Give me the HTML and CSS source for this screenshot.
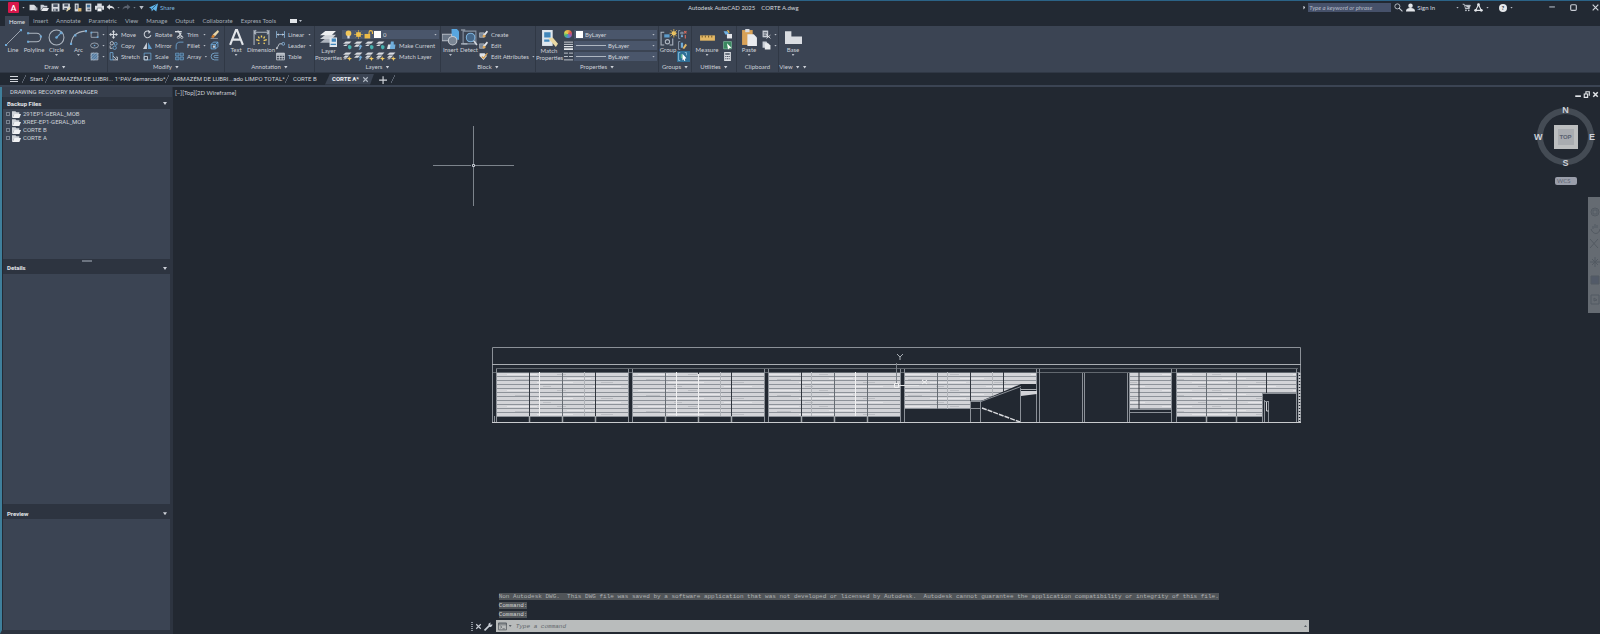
FILE: index.html
```html
<!DOCTYPE html>
<html lang="en">
<head>
<meta charset="utf-8">
<title>Autodesk AutoCAD 2025 - CORTE A.dwg</title>
<link rel="stylesheet" href="styles.css">
</head>
<body>
<svg class="defs" aria-hidden="true">
  <defs>
    <symbol id="new" viewBox="0 0 16 16"><path d="M1 3h8l4 4v6H1z" fill="#d9dce1"/><path d="M10 8h5v5h-5z" fill="#aeb4bd"/></symbol>
    <symbol id="open" viewBox="0 0 16 16"><path d="M1 3h5l2 2h5v3H5l-3 5H1z" fill="#c9ced6"/><path d="M5 9h11l-3 5H2z" fill="#e4e6ea"/></symbol>
    <symbol id="save" viewBox="0 0 16 16"><path d="M1 1h14v14H1z" fill="#d9dce1"/><path d="M4 2h8v5H4zM4 10h8v5H4z" fill="#4a5361"/><path d="M6 10h2v4H6z" fill="#d9dce1"/></symbol>
    <symbol id="saveas" viewBox="0 0 16 16"><path d="M1 1h13v11H1z" fill="#d9dce1"/><path d="M4 2h7v4H4zM4 9h5v3H4z" fill="#4a5361"/><path d="M7 14l7-7 2 2-7 6z" fill="#e9d9a6"/></symbol>
    <symbol id="mobile" viewBox="0 0 16 16"><path d="M3 1h7v14H3z" fill="#d9dce1"/><path d="M5 3h3v8H5z" fill="#59616e"/><path d="M9 9h6v6H9z" fill="#d5b06c"/></symbol>
    <symbol id="webdoc" viewBox="0 0 16 16"><path d="M3 1h10v14H3z" fill="#d9dce1"/><path d="M5 3h6v5H5z" fill="#3f6c93"/><path d="M6 10h5v3H6z" fill="#59616e"/></symbol>
    <symbol id="plot" viewBox="0 0 16 16"><path d="M4 1h8v4H4zM0 5h16v7H0z" fill="#d9dce1"/><path d="M4 9h8v6H4z" fill="#fff" stroke="#4a5361"/></symbol>
    <symbol id="undo" viewBox="0 0 16 16"><path d="M1 7l6-5v3c5 0 8 3 8 7-2-3-4-3-8-3v3z" fill="#d9dce1"/></symbol>
    <symbol id="redo" viewBox="0 0 16 16"><path d="M15 7L9 2v3c-5 0-8 3-8 7 2-3 4-3 8-3v3z" fill="#59616e"/></symbol>
    <symbol id="plane" viewBox="0 0 16 16"><path d="M0 8L16 1l-3 14-5-4-3 4-1-5z" fill="#5fb4ea"/><path d="M5 11l8-8" stroke="#222933"/></symbol>
    <symbol id="search" viewBox="0 0 16 16"><circle cx="6" cy="6" r="4.500" fill="none" stroke="#c9ced6" stroke-width="1.500"/><path d="M9 9l6 6" stroke="#c9ced6" stroke-width="2"/></symbol>
    <symbol id="user" viewBox="0 0 16 16"><circle cx="8" cy="5" r="4" fill="#e2e5e9"/><path d="M0 15c0-5 4-6 8-6s8 1 8 6z" fill="#e2e5e9"/></symbol>
    <symbol id="cart" viewBox="0 0 16 16"><path d="M1 2h3l2 8h8M5 4h10l-2 5H6" fill="#c9ced6" stroke="#c9ced6"/><circle cx="7" cy="13" r="1.500" fill="#c9ced6"/><circle cx="12" cy="13" r="1.500" fill="#c9ced6"/></symbol>
    <symbol id="tri" viewBox="0 0 16 16"><path d="M8 3L3 13h10z" fill="none" stroke="#e2e5e9" stroke-width="2"/><circle cx="8" cy="3" r="2.500" fill="#e2e5e9"/><circle cx="3" cy="13" r="2.500" fill="#e2e5e9"/><circle cx="13" cy="13" r="2.500" fill="#e2e5e9"/></symbol>
    <symbol id="line" viewBox="0 0 16 16"><path d="M1 15L15 1" stroke="#aeb6c1" stroke-width=".8"/><path d="M0 14h2v2H0zM14 0h2v2h-2z" fill="#6fa9d6"/></symbol>
    <symbol id="polyline" viewBox="0 0 16 16"><path d="M2 4h8a4 4 0 0 1 0 8H2" fill="none" stroke="#aeb6c1"/><path d="M1 3h2v2H1zM1 11h2v2H1zM13 6h2v2h-2z" fill="#6fa9d6"/></symbol>
    <symbol id="circle" viewBox="0 0 16 16"><circle cx="8" cy="8" r="7" fill="none" stroke="#aeb6c1"/><path d="M8 8l5-5M11 3h2v2" stroke="#6fa9d6" fill="none"/><circle cx="8" cy="8" r="1.200" fill="#6fa9d6"/></symbol>
    <symbol id="arc" viewBox="0 0 16 16"><path d="M1 14C2 6 6 3 14 2" fill="none" stroke="#aeb6c1"/><path d="M0 13h2v2H0zM14 1h2v2h-2zM4 5h2v2H4z" fill="#6fa9d6"/></symbol>
    <symbol id="rect" viewBox="0 0 16 16"><path d="M2 4h12v9H2z" fill="none" stroke="#aeb6c1" stroke-width="1.400"/><path d="M1 3h3v3H1zM12 11h3v3h-3z" fill="#6fa9d6"/></symbol>
    <symbol id="ellipse" viewBox="0 0 16 16"><ellipse cx="8" cy="8" rx="7" ry="4.500" fill="none" stroke="#aeb6c1" stroke-width="1.400"/><circle cx="8" cy="8" r="1.500" fill="#6fa9d6"/></symbol>
    <symbol id="hatch" viewBox="0 0 16 16"><path d="M2 2h12v12H2z" fill="#55789b" stroke="#aeb6c1" stroke-width="1.500"/><path d="M1 6L6 1M1 11L11 1M2 15L15 2M7 15l8-8" stroke="#9cc4e4"/></symbol>
    <symbol id="move" viewBox="0 0 16 16"><path d="M8 0l3 4H9v3h3V5l4 3-4 3V9H9v3h2l-3 4-3-4h2V9H4v2L0 8l4-3v2h3V4H5z" fill="#d3d7dd"/></symbol>
    <symbol id="copy" viewBox="0 0 16 16"><circle cx="5" cy="4" r="3" fill="none" stroke="#c9ced6" stroke-width="1.500"/><circle cx="12" cy="5" r="2.500" fill="none" stroke="#6fa9d6" stroke-width="1.500"/><circle cx="10" cy="12" r="3" fill="none" stroke="#6fa9d6" stroke-width="1.500"/><path d="M2 8v5h4" fill="none" stroke="#c9ced6" stroke-width="1.500"/></symbol>
    <symbol id="stretch" viewBox="0 0 16 16"><path d="M2 1h5v13H2z" fill="none" stroke="#6fa9d6" stroke-width="1.500"/><path d="M7 7l7 7H7M12 9h3v6" fill="none" stroke="#c9ced6" stroke-width="1.500"/></symbol>
    <symbol id="rotate" viewBox="0 0 16 16"><path d="M12 3A6 6 0 1 0 14 9" fill="none" stroke="#c9ced6" stroke-width="1.800"/><path d="M9 0l5 3-4 4z" fill="#c9ced6"/></symbol>
    <symbol id="mirror" viewBox="0 0 16 16"><path d="M7 2v12H0z" fill="#c9ced6"/><path d="M9 2v12h7z" fill="#5e9ccc"/></symbol>
    <symbol id="scale" viewBox="0 0 16 16"><path d="M2 2h12v12H2z" fill="none" stroke="#6fa9d6" stroke-width="1.400"/><path d="M2 8h6v6H2z" fill="none" stroke="#d3d7dd" stroke-width="1.500"/></symbol>
    <symbol id="trim" viewBox="0 0 16 16"><path d="M0 3h12" stroke="#d3d7dd" stroke-width="2.500"/><path d="M5 1l7 11M11 5l-5 7" stroke="#d3d7dd" stroke-width="2"/><circle cx="12" cy="13" r="2" fill="none" stroke="#d3d7dd" stroke-width="1.500"/><circle cx="6" cy="13" r="2" fill="none" stroke="#d3d7dd" stroke-width="1.500"/></symbol>
    <symbol id="fillet" viewBox="0 0 16 16"><path d="M2 15V9c0-5 3-7 7-7h6" fill="none" stroke="#6fa9d6" stroke-width="1.500"/></symbol>
    <symbol id="array" viewBox="0 0 16 16"><path d="M1 2h6v5H1zM9 2h6v5H9zM1 9h6v5H1zM9 9h6v5H9z" fill="#3a5d7d" stroke="#7fb4de"/></symbol>
    <symbol id="erase" viewBox="0 0 16 16"><path d="M14 0l2 3-7 8-4-3z" fill="#e9d6a8"/><path d="M5 8l4 3-3 3-4-1z" fill="#d9822f"/><path d="M1 15h13" stroke="#c9ced6"/></symbol>
    <symbol id="explode" viewBox="0 0 16 16"><path d="M2 6h8v8H2zM2 6l4-4h8v8l-4 4M10 6l4-4" fill="none" stroke="#6fb0e2" stroke-width="1.500"/><path d="M5 8h4v4H5z" fill="#c9ced6"/></symbol>
    <symbol id="offset" viewBox="0 0 16 16"><path d="M15 2H8a6 6 0 0 0 0 12h7M15 6H9a2 2 0 0 0 0 4h6" fill="none" stroke="#7fb4de" stroke-width="1.400"/></symbol>
    <symbol id="text" viewBox="0 0 16 16"><path d="M2 15L7.500 1h1L14 15M4 10h8" fill="none" stroke="#e2e5e9" stroke-width="2"/></symbol>
    <symbol id="dim" viewBox="0 0 16 16"><path d="M1 1v14M15 1v14M1 3h14M3 1L1 3l2 2M13 1l2 2-2 2" fill="none" stroke="#aeb6c1"/><path d="M8 6v2M5 7l1 2M11 7l-1 2M3 10l3 1M13 10l-3 1M5 14l1-1M11 14l-1-1" stroke="#f0cf62" stroke-width="1.300"/></symbol>
    <symbol id="linear" viewBox="0 0 16 16"><path d="M1 2v12M15 2v12M2 8h12" stroke="#8ab6dc" stroke-width="1.500"/><path d="M1 8l4-2v4zM15 8l-4-2v4z" fill="#c9ced6"/></symbol>
    <symbol id="leader" viewBox="0 0 16 16"><path d="M1 14L6 5h5" fill="none" stroke="#c9ced6" stroke-width="1.500"/><circle cx="13" cy="5" r="2.500" fill="none" stroke="#8ab6dc" stroke-width="1.500"/><path d="M0 15l1-5 3 3z" fill="#c9ced6"/></symbol>
    <symbol id="table" viewBox="0 0 16 16"><path d="M1 2h14v12H1zM1 6h14M1 10h14M6 6v8M11 6v8" fill="none" stroke="#c9ced6" stroke-width="1.400"/><path d="M1 2h14v3H1z" fill="#c9ced6"/></symbol>
    <symbol id="layers" viewBox="0 0 16 16"><path d="M5 8h10l-4 4H0z" fill="#aeb4bd"/><path d="M5 4.500h10l-4 4H0z" fill="#cfd3d9"/><path d="M5 1h10l-4 4H0z" fill="#eceef0"/><path d="M9 7h7v9H9z" fill="#dfe7ee"/><path d="M11 8h4v3h-4zM10 13h5v1h-5z" fill="#3f86bd"/></symbol>
    <symbol id="bulb" viewBox="0 0 16 16"><circle cx="8" cy="6" r="5" fill="#f2c75a"/><path d="M6 10h4v5H6z" fill="#dcdfe3"/></symbol>
    <symbol id="sun" viewBox="0 0 16 16"><circle cx="8" cy="8" r="4.500" fill="#f0c14c"/><path d="M8 0v16M0 8h16M3 3l10 10M13 3L3 13" stroke="#f0c14c"/></symbol>
    <symbol id="lock" viewBox="0 0 16 16"><path d="M1 7h10v8H1z" fill="#efbd48"/><path d="M9 7V4a3 3 0 0 1 6 0v3" fill="none" stroke="#efbd48" stroke-width="2"/></symbol>
    <symbol id="lay-b" viewBox="0 0 16 16"><path d="M5 1h10l-4 4H0zM4 6h7l-4 4H0z" fill="#d9dce1"/><path d="M12 6l3 4h-2c0 3-1 5-5 6 2-3 2-4 2-6H8z" fill="#6fa9d6"/></symbol>
    <symbol id="lay-c" viewBox="0 0 16 16"><path d="M5 1h10l-4 4H0zM4 6h5l-3 3H0z" fill="#d9dce1"/><path d="M9 8l3-1 3 2v4l-3 2-3-2z" fill="#45b1ae"/></symbol>
    <symbol id="lay-g" viewBox="0 0 16 16"><path d="M5 1h10l-4 4H0zM4 6h7l-4 4H0zM3 11h4l-2 2H0z" fill="#d9dce1"/><path d="M11 7l1 3 4 1-3 2-1 3-2-3-3-1 3-2z" fill="#f0c862"/></symbol>
    <symbol id="current" viewBox="0 0 16 16"><path d="M2 6h9l-3 8H0z" fill="#dfe3e8"/><path d="M7 1h5v5h3l-1 8H5z" fill="#6faedc"/></symbol>
    <symbol id="insert" viewBox="0 0 16 16"><path d="M9 0h5l2 2v8H9z" fill="#58a6df"/><path d="M0 5h9v6H0z" fill="#697585" stroke="#b7bdc6"/><circle cx="10" cy="11" r="4" fill="#7b8694" stroke="#c3c8cf"/></symbol>
    <symbol id="detect" viewBox="0 0 16 16"><path d="M2 2h12v12H2zM2 2v12" fill="none" stroke="#8894a4"/><path d="M0 1h4M0 14h6" stroke="#aeb6c1"/><circle cx="9" cy="8" r="4" fill="#46688a" stroke="#7fb4de"/><path d="M12 11l3 4" stroke="#d3d7dd" stroke-width="1.500"/></symbol>
    <symbol id="blk" viewBox="0 0 16 16"><path d="M1 5h8v8H1z" fill="#7b8796" stroke="#c9ced6"/><path d="M7 9l7-8 2 2-6 8z" fill="#e4e6ea"/><circle cx="9" cy="11" r="2.500" fill="#e0a95b"/></symbol>
    <symbol id="attr" viewBox="0 0 16 16"><path d="M1 2h9l4 5-6 7-7-7z" fill="#dfe3e8"/><path d="M5 8l3 3 7-9" fill="none" stroke="#d49b48" stroke-width="2"/></symbol>
    <symbol id="match" viewBox="0 0 16 16"><path d="M1 0h10v15H1z" fill="#dfe7ee"/><path d="M3 2h6v5H3zM3 9h5v2H3z" fill="#4187bb"/><path d="M7 8l4-1 5 6-2 3z" fill="#ead9a4"/></symbol>
    <symbol id="lines3" viewBox="0 0 16 16"><path d="M0 2h16M0 6h16" stroke="#e2e5e9" stroke-width="1.500"/><path d="M0 9h16v2H0zM0 13h16v3H0z" fill="#e2e5e9"/></symbol>
    <symbol id="dashes" viewBox="0 0 16 16"><path d="M0 2h7M9 2h7M0 8h7M9 8h7M0 14h16" stroke="#c9ced6" stroke-width="1.600"/></symbol>
    <symbol id="group" viewBox="0 0 16 16"><path d="M4 3H1v12h3M12 9v6H9" fill="none" stroke="#aeb6c1"/><path d="M4 5h5v3H4z" fill="#5d9dcc"/><circle cx="7" cy="12" r="2" fill="none" stroke="#aeb6c1"/><circle cx="13" cy="4" r="2" fill="#f4d37a"/><path d="M13 0v8M9 4h7M10 1l6 6M16 1l-6 6" stroke="#e9bd58" stroke-width=".7"/></symbol>
    <symbol id="grp-r" viewBox="0 0 16 16"><path d="M4 1H1v14h3M5 4h4v3H5z" fill="none" stroke="#9fb0c2" stroke-width="1.300"/><circle cx="7" cy="11" r="2" fill="#6fa9d6"/><path d="M11 2l4 4M15 2l-4 4M13 9v6" stroke="#d66b5d" stroke-width="2"/></symbol>
    <symbol id="grp-e" viewBox="0 0 16 16"><path d="M4 1H1v14h3" fill="none" stroke="#9fb0c2" stroke-width="1.300"/><path d="M5 3h4v9H5z" fill="#6fa9d6"/><path d="M8 13l5-8 3 2-5 7z" fill="#e2b765"/></symbol>
    <symbol id="grp-s" viewBox="0 0 16 16"><path d="M4 1H1v14h3M12 1h3v5" fill="none" stroke="#9fd0ea" stroke-width="1.300"/><path d="M5 4h3v7H5z" fill="#59b38b"/><path d="M8 3l7 8-3 1 1 3-2 1-1-3-2 2z" fill="#fff"/></symbol>
    <symbol id="ruler" viewBox="0 0 16 16"><path d="M1 6h14v5H1z" fill="#e2b765"/><path d="M3 8v-2M6 8v-2M9 8v-2M12 8v-2" stroke="#7a5f2b"/></symbol>
    <symbol id="qsel" viewBox="0 0 16 16"><path d="M1 2h7l3 6H4z" fill="#6fb0e2"/><path d="M7 7h9v8H7z" fill="#e4e6ea"/><path d="M8 0l3 5" stroke="#f0c14c" stroke-width="2"/></symbol>
    <symbol id="selall" viewBox="0 0 16 16"><path d="M1 1h14v13H1z" fill="#39875f" stroke="#8fd0ae"/><path d="M7 4l8 8-4 1-2 2z" fill="#fff"/></symbol>
    <symbol id="calc" viewBox="0 0 16 16"><path d="M2 0h12v16H2z" fill="#d9dce1"/><path d="M4 2h8v3H4zM4 7h2v2H4zM7 7h2v2H7zM10 7h2v2h-2zM4 11h2v2H4zM7 11h2v2H7zM10 11h2v2h-2z" fill="#4a5361"/></symbol>
    <symbol id="paste" viewBox="0 0 16 16"><path d="M1 1h10v14H1z" fill="#d8a258"/><path d="M4 0h4v3H4z" fill="#d9dce1"/><path d="M6 5h6l3 3v8H6z" fill="#e9ebee"/></symbol>
    <symbol id="cut" viewBox="0 0 16 16"><path d="M1 1h10v12H1z" fill="#c9ced6"/><path d="M3 4h6v2H3zM3 8h5v2H3z" fill="#59616e"/><path d="M8 8l7 7M15 9l-7 6" stroke="#e4e6ea" stroke-width="1.500"/></symbol>
    <symbol id="copyclip" viewBox="0 0 16 16"><path d="M1 1h7l2 3v8H1z" fill="#c9ced6"/><path d="M5 4h6l4 4v7H5z" fill="#e9ebee"/></symbol>
    <symbol id="base" viewBox="0 0 16 16"><path d="M0 2h6v5h10v7H0z" fill="#d9dce1"/></symbol>
    <symbol id="folder" viewBox="0 0 16 16"><path d="M0 2h6l2 2h5v3H4l-3 7H0z" fill="#cfd3d9"/><path d="M4 7h12l-3 7H1z" fill="#f0f1f3"/></symbol>
    <symbol id="wrench" viewBox="0 0 16 16"><path d="M1 15l8-8" stroke="#c9ced6" stroke-width="3"/><path d="M15 4l-3 1-1-1 1-3a5 5 0 0 0-4 6l2 2a5 5 0 0 0 5-5z" fill="#c9ced6"/></symbol>
    <symbol id="prompt" viewBox="0 0 16 16"><path d="M1 2h14v12H1z" fill="none" stroke="#5b6167" stroke-width="1.500"/><path d="M1 2h14v3H1zM4 7l3 2-3 2M8 12h4" fill="none" stroke="#5b6167" stroke-width="1.300"/></symbol>
    <pattern id="siding" width="131" height="16" patternUnits="userSpaceOnUse" x="497" y="372">
      <rect width="131" height="16" fill="#d3d4d8"/>
      <path d="M0 .5h131M0 4.500h131M0 8.500h131M0 12.500h131" stroke="#8d9299"/>
      <path d="M10 2.500h30M70 6.500h24M40 10.500h36M96 14.500h28" stroke="#e4e4e7"/>
      <path d="M60 2.500h9M18 7.500h14M104 10.500h12M46 14.500h8" stroke="#bcbec3"/>
    </pattern>
  </defs>
</svg>

<header class="titlebar">
  <div class="quick">
    <button class="logo" aria-label="Application menu">A</button><i class="dd"></i>
    <button aria-label="New"><svg class="ic"><use href="#new"/></svg></button>
    <button aria-label="Open"><svg class="ic"><use href="#open"/></svg></button>
    <button aria-label="Save"><svg class="ic"><use href="#save"/></svg></button>
    <button aria-label="Save as"><svg class="ic"><use href="#saveas"/></svg></button>
    <button aria-label="Open from mobile"><svg class="ic"><use href="#mobile"/></svg></button>
    <button aria-label="Save to web"><svg class="ic"><use href="#webdoc"/></svg></button>
    <button aria-label="Plot"><svg class="ic"><use href="#plot"/></svg></button>
    <button aria-label="Undo"><svg class="ic"><use href="#undo"/></svg></button><i class="dd dim"></i>
    <button aria-label="Redo"><svg class="ic"><use href="#redo"/></svg></button><i class="dd dim"></i>
    <i class="dd wide"></i>
    <button class="share"><svg class="ic"><use href="#plane"/></svg>Share</button>
  </div>
  <h1 class="doc-title"><span>Autodesk AutoCAD 2025</span><span>CORTE A.dwg</span></h1>
  <div class="account">
    <i class="play"></i>
    <input class="search" type="search" aria-label="Search" placeholder="Type a keyword or phrase">
    <button aria-label="Search"><svg class="ic"><use href="#search"/></svg></button>
    <button class="sign"><svg class="ic"><use href="#user"/></svg>Sign In</button>
    <i class="dd"></i>
    <button aria-label="Store"><svg class="ic"><use href="#cart"/></svg></button>
    <button aria-label="Apps"><svg class="ic"><use href="#tri"/></svg></button><i class="dd"></i>
    <button class="help" aria-label="Help">?</button><i class="dd"></i>
    <div class="window-buttons">
      <button aria-label="Minimize"><svg class="ic" viewBox="0 0 8 8"><path d="M2 3.500h5" stroke="#aeb6c1"/></svg></button>
      <button aria-label="Maximize"><svg class="ic" viewBox="0 0 8 8"><rect x="1.500" y="1.500" width="5" height="5" rx="1" fill="none" stroke="#c9ced6"/></svg></button>
      <button aria-label="Close"><svg class="ic" viewBox="0 0 8 8"><path d="M1.500 1.500l5 5M6.500 1.500l-5 5" stroke="#d3d7dd"/></svg></button>
    </div>
  </div>
</header>

<nav class="menu">
  <button class="active">Home</button><button>Insert</button><button>Annotate</button><button>Parametric</button><button>View</button><button>Manage</button><button>Output</button><button>Collaborate</button><button>Express Tools</button>
  <button class="camera" aria-label="Ribbon display"><i></i><i class="dd"></i></button>
</nav>

<div class="ribbon">
  <section class="panel draw">
    <div class="tools">
      <button class="big"><svg><use href="#line"/></svg>Line</button>
      <button class="big"><svg><use href="#polyline"/></svg>Polyline</button>
      <button class="big"><svg><use href="#circle"/></svg>Circle<i class="dd"></i></button>
      <button class="big"><svg><use href="#arc"/></svg>Arc<i class="dd"></i></button>
      <div class="col">
        <button aria-label="Rectangle"><svg class="ic"><use href="#rect"/></svg><i class="dd"></i></button>
        <button aria-label="Ellipse"><svg class="ic"><use href="#ellipse"/></svg><i class="dd"></i></button>
        <button aria-label="Hatch"><svg class="ic"><use href="#hatch"/></svg><i class="dd"></i></button>
      </div>
    </div>
    <button class="caption">Draw<i class="dd"></i></button>
  </section>
  <section class="panel modify">
    <div class="tools">
      <div class="col">
        <button><svg class="ic"><use href="#move"/></svg>Move</button>
        <button><svg class="ic"><use href="#copy"/></svg>Copy</button>
        <button><svg class="ic"><use href="#stretch"/></svg>Stretch</button>
      </div>
      <div class="col">
        <button><svg class="ic"><use href="#rotate"/></svg>Rotate</button>
        <button><svg class="ic"><use href="#mirror"/></svg>Mirror</button>
        <button><svg class="ic"><use href="#scale"/></svg>Scale</button>
      </div>
      <div class="col spread">
        <button><svg class="ic"><use href="#trim"/></svg>Trim<i class="dd"></i></button>
        <button><svg class="ic"><use href="#fillet"/></svg>Fillet<i class="dd"></i></button>
        <button><svg class="ic"><use href="#array"/></svg>Array<i class="dd"></i></button>
      </div>
      <div class="col">
        <button aria-label="Erase"><svg class="ic"><use href="#erase"/></svg></button>
        <button aria-label="Explode"><svg class="ic"><use href="#explode"/></svg></button>
        <button aria-label="Offset"><svg class="ic"><use href="#offset"/></svg></button>
      </div>
    </div>
    <button class="caption">Modify<i class="dd"></i></button>
  </section>
  <section class="panel annotation">
    <div class="tools">
      <button class="big"><svg><use href="#text"/></svg>Text<i class="dd"></i></button>
      <button class="big"><svg><use href="#dim"/></svg>Dimension</button>
      <div class="col spread">
        <button><svg class="ic"><use href="#linear"/></svg>Linear<i class="dd"></i></button>
        <button><svg class="ic"><use href="#leader"/></svg>Leader<i class="dd"></i></button>
        <button><svg class="ic"><use href="#table"/></svg>Table</button>
      </div>
    </div>
    <button class="caption">Annotation<i class="dd"></i></button>
  </section>
  <section class="panel layer">
    <div class="tools">
      <button class="big two"><svg><use href="#layers"/></svg>Layer<br>Properties</button>
      <div class="col">
        <div class="combo">
          <svg class="ic"><use href="#bulb"/></svg><svg class="ic"><use href="#sun"/></svg><svg class="ic"><use href="#lock"/></svg><i class="swatch"></i>
          <select aria-label="Layer"><option>0</option></select><i class="dd"></i>
        </div>
        <div class="row">
          <button aria-label="Layer off"><svg class="ic"><use href="#lay-c"/></svg></button><button aria-label="Isolate"><svg class="ic"><use href="#lay-b"/></svg></button><button aria-label="Freeze"><svg class="ic"><use href="#lay-c"/></svg></button><button aria-label="Lock"><svg class="ic"><use href="#lay-c"/></svg></button><button><svg class="ic"><use href="#current"/></svg>Make Current</button>
        </div>
        <div class="row">
          <button aria-label="Layer on"><svg class="ic"><use href="#lay-g"/></svg></button><button aria-label="Unisolate"><svg class="ic"><use href="#lay-b"/></svg></button><button aria-label="Thaw"><svg class="ic"><use href="#lay-g"/></svg></button><button aria-label="Unlock"><svg class="ic"><use href="#lay-g"/></svg></button><button><svg class="ic"><use href="#lay-g"/></svg>Match Layer</button>
        </div>
      </div>
    </div>
    <button class="caption">Layers<i class="dd"></i></button>
  </section>
  <section class="panel block">
    <div class="tools">
      <button class="big"><svg><use href="#insert"/></svg>Insert<i class="dd"></i></button>
      <button class="big"><svg><use href="#detect"/></svg>Detect</button>
      <div class="col">
        <button><svg class="ic"><use href="#blk"/></svg>Create</button>
        <button><svg class="ic"><use href="#blk"/></svg>Edit</button>
        <button><svg class="ic"><use href="#attr"/></svg>Edit Attributes<i class="dd"></i></button>
      </div>
    </div>
    <button class="caption">Block<i class="dd"></i></button>
  </section>
  <section class="panel props">
    <div class="tools">
      <button class="big two"><svg><use href="#match"/></svg>Match<br>Properties</button>
      <div class="col icons">
        <i class="wheel"></i>
        <svg class="ic"><use href="#lines3"/></svg>
        <svg class="ic"><use href="#dashes"/></svg>
      </div>
      <div class="col">
        <div class="combo"><i class="swatch"></i><select aria-label="Color"><option>ByLayer</option></select><i class="dd"></i></div>
        <div class="combo"><i class="rule"></i><select aria-label="Lineweight"><option>ByLayer</option></select><i class="dd"></i></div>
        <div class="combo"><i class="rule"></i><select aria-label="Linetype"><option>ByLayer</option></select><i class="dd"></i></div>
      </div>
    </div>
    <button class="caption">Properties<i class="dd"></i></button>
  </section>
  <section class="panel groups">
    <div class="tools">
      <button class="big"><svg><use href="#group"/></svg>Group</button>
      <div class="col">
        <button aria-label="Ungroup"><svg class="ic"><use href="#grp-r"/></svg></button>
        <button aria-label="Group edit"><svg class="ic"><use href="#grp-e"/></svg></button>
        <button class="on" aria-label="Group selection"><svg class="ic"><use href="#grp-s"/></svg></button>
      </div>
    </div>
    <button class="caption">Groups<i class="dd"></i></button>
  </section>
  <section class="panel utils">
    <div class="tools">
      <button class="big"><svg><use href="#ruler"/></svg>Measure<i class="dd"></i></button>
      <div class="col">
        <button aria-label="Quick select"><svg class="ic"><use href="#qsel"/></svg></button>
        <button aria-label="Select all"><svg class="ic"><use href="#selall"/></svg></button>
        <button aria-label="Calculator"><svg class="ic"><use href="#calc"/></svg></button>
      </div>
    </div>
    <button class="caption">Utilities<i class="dd"></i></button>
  </section>
  <section class="panel clip">
    <div class="tools">
      <button class="big"><svg><use href="#paste"/></svg>Paste<i class="dd"></i></button>
      <div class="col">
        <button aria-label="Cut"><svg class="ic"><use href="#cut"/></svg><i class="dd"></i></button>
        <button aria-label="Copy clip"><svg class="ic"><use href="#copyclip"/></svg><i class="dd"></i></button>
      </div>
    </div>
    <button class="caption">Clipboard</button>
  </section>
  <section class="panel view">
    <div class="tools">
      <button class="big"><svg><use href="#base"/></svg>Base<i class="dd"></i></button>
    </div>
    <button class="caption">View<i class="dd"></i><i class="dd"></i></button>
  </section>
</div>

<nav class="files">
  <button class="burger" aria-label="Drawings"><i></i></button><i class="slash"></i>
  <button class="start">Start</button><i class="slash"></i>
  <button class="long">ARMAZÉM DE LUBRI... 1°PAV demarcado*</button><i class="slash"></i>
  <button class="long">ARMAZÉM DE LUBRI...ado LIMPO TOTAL*</button><i class="slash"></i>
  <button class="short">CORTE B</button>
  <button class="current">CORTE A*<svg class="ic" viewBox="0 0 8 8"><path d="M2 2l4 4M6 2L2 6" stroke="#aeb6c1"/></svg></button>
  <button class="plus" aria-label="New drawing"><svg class="ic" viewBox="0 0 8 8"><path d="M4.500 1v7M1 4.500h7" stroke="#d3d7dd"/></svg></button><i class="slash"></i>
</nav>

<main class="work">
  <aside class="recovery">
    <h2>DRAWING RECOVERY MANAGER</h2>
    <section class="backup">
      <h3>Backup Files<i class="dd"></i></h3>
      <ul>
        <li><i class="box"></i><svg class="ic"><use href="#folder"/></svg>291EP1-GERAL_MOB</li>
        <li><i class="box"></i><svg class="ic"><use href="#folder"/></svg>XREF-EP1-GERAL_MOB</li>
        <li><i class="box"></i><svg class="ic"><use href="#folder"/></svg>CORTE B</li>
        <li><i class="box"></i><svg class="ic"><use href="#folder"/></svg>CORTE A</li>
      </ul>
    </section>
    <div class="splitter"><i></i></div>
    <section class="details"><h3>Details<i class="dd"></i></h3></section>
    <div class="splitter"></div>
    <section class="preview"><h3>Preview<i class="dd"></i></h3></section>
  </aside>

  <div class="canvas">
    <svg class="drawing" viewBox="173 87 1427 547" role="img" aria-label="Section A drawing">
      <g fill="url(#siding)">
        <path d="M497 372h131v44H497zM633 372h131v44H633zM769 372h131v44H769z"/>
        <path d="M904 372h133v12h-16l-40 17h-11v8h-66z"/>
        <path d="M1129 372h43v37h-43zM1176 372h120v21h-34v23h-86z"/>
      </g>
      <g fill="none" stroke="#8b9097">
        <path d="M492.500 422V347.500h808V422"/>
        <path d="M496 368.500h802M493 372.500h807" stroke="#62686f"/>
        <path d="M492 364.500h809" stroke="#a9adb2"/>
        <path d="M496.500 369v53M628.500 369v53M632.500 369v53M764.500 369v53M768.500 369v53M900.500 369v53M904.500 369v53M1036.500 369v53M1039.500 369v53M1082.500 373v49M1084.500 373v49M1127.500 373v49M1129.500 373v49M1171.500 369v53M1176.500 369v53M1296.500 369v53M1298.500 372v50"/>
        <path d="M497 416.500h131M633 416.500h131M769 416.500h131M904 408.500h77M1129 409.500h42M1129 412.500h42M1176 416.500h86"/>
        <path d="M494.500 416v6M970.500 401v21M980.500 401v21M1020.500 388v34M970 401.500h11M981 401.500l40-15M1262.500 393v29M1264.500 400v22M1262 393.500h34M1268.500 401v21M1265 401.500h4"/>
      </g>
      <path d="M529.500 372v44M595.500 372v44M698.500 372v44M731.500 372v44M801.500 372v44M970.500 372v29M1003.500 372v20M1139 372v37M1266.500 372v21" stroke="#30353d"/>
      <path d="M562.500 372v44M665.500 372v44M834.500 372v44M867.500 372v44M937.500 372v37M1206.500 372v44M1236.500 372v44" stroke="#666c73"/>
      <path d="M529.500 416v6M562.500 416v6M595.500 416v6M665.500 416v6M698.500 416v6M731.500 416v6M801.500 416v6M834.500 416v6M867.500 416v6M1206.500 416v6M1236.500 416v6" stroke="#a0a4a9" stroke-width="1.500"/>
      <path d="M539.500 372v44M676.500 372v44M698.500 374v42M855.500 372v44" stroke="#f1f1f2"/>
      <path d="M584.500 372v44M720.500 372v44M811.500 372v44M947.500 372v37M992.500 372v24" stroke="#b0b3b8"/>
      <path d="M1021 389.500h16" stroke="#a9adb2"/><path d="M1021 391h16v3l-16 2z" fill="#d3d4d8"/>
      <path d="M982 408l38 14" stroke="#d8d9dc" stroke-width="1.500" stroke-dasharray="5 1"/>
      <path d="M1266.500 402v9h2" fill="none" stroke="#d3d4d8"/>
      <path d="M1299.500 373v49" stroke="#c6c8cc" stroke-width="2" stroke-dasharray="2 1"/>
      <path d="M492 422.500h809" stroke="#c9cbce"/>
      <g fill="none" stroke="#aab0b6"><path d="M896.500 363v20" stroke="#7c8289"/><path d="M899 385.500h20" stroke="#e4e5e7"/><path d="M894.500 383.500h4v4h-4z" stroke="#f1f1f2"/><path d="M897 354l3 3 3-3M900 357v3"/><path d="M922 380l5 4M927 380l-5 4" stroke="#f1f1f2"/></g>
      <g fill="none" stroke="#7d848c"><path d="M433 165.500h38M475 165.500h39M473.500 126v38M473.500 167v39"/><path d="M472.500 164.500h2v2h-2z" stroke="#c9ced6"/></g>
    </svg>

    <button class="view-label">[−][Top][2D Wireframe]</button>
    <div class="viewport-buttons">
      <button aria-label="Minimize viewport"><svg class="ic" viewBox="0 0 8 8"><path d="M2 5.500h5" stroke="#e2e5e9" stroke-width="1.500"/></svg></button>
      <button aria-label="Restore viewport"><svg class="ic" viewBox="0 0 8 8"><path d="M2 3.500h3v3H2zM3.500 3V1.500h3v3H6" fill="none" stroke="#e2e5e9"/></svg></button>
      <button aria-label="Close viewport"><svg class="ic" viewBox="0 0 8 8"><path d="M2 2l4 4M6 2L2 6" stroke="#e2e5e9" stroke-width="1.300"/></svg></button>
    </div>
    <div class="compass">
      <span class="n">N</span><span class="w">W</span><button class="top">TOP</button><span class="e">E</span><span class="s">S</span>
    </div>
    <button class="wcs">WCS</button>
    <div class="navbar">
      <svg viewBox="0 0 12 116"><g fill="none" stroke="#535a62"><circle cx="7" cy="15" r="4"/><path d="M5 13h4v4H5zM3 32c2 6 8 6 9 0M5 32v-3M7 31v-4M9 31v-3M2 42l8 9M10 42l-8 9M7 60v10M2 65h10M4 62l6 6M10 62l-6 6"/><path d="M3 79h8v8H3z" fill="#525a68"/><path d="M3 98h8v9H3zM6 101v3l3-1z"/></g></svg>
    </div>

    <div class="command">
      <p>Non Autodesk DWG.&nbsp; This DWG file was saved by a software application that was not developed or licensed by Autodesk.&nbsp; Autodesk cannot guarantee the application compatibility or integrity of this file.</p>
      <p>Command:</p>
      <p>Command:</p>
      <div class="command-line">
        <i class="grip"></i>
        <button aria-label="Close command line"><svg class="ic" viewBox="0 0 8 8"><path d="M2 2l4 4M6 2L2 6" stroke="#c9ced6"/></svg></button>
        <button aria-label="Customize"><svg class="ic"><use href="#wrench"/></svg></button>
        <div class="prompt"><svg class="ic"><use href="#prompt"/></svg><i class="dd"></i><input aria-label="Command" placeholder="Type a command"><i class="dd up"></i></div>
      </div>
    </div>
  </div>
</main>
</body>
</html>
```
FILE: styles.css
```css
* { box-sizing: border-box; }
body {
  margin: 0;
  min-height: 100vh;
  display: flex;
  flex-direction: column;
  border-top: 1px solid #2b6387;
  background: #222933;
  color: #cdd1d8;
  font: 6px/8px Lato, "Liberation Sans", sans-serif;
  overflow: hidden;
}
button, input, select {
  font: inherit;
  color: inherit;
  background: none;
  border: 0;
  padding: 0;
  margin: 0;
  border-radius: 0;
}
button { display: flex; align-items: center; white-space: nowrap; }
h1, h2, h3, p, ul { margin: 0; padding: 0; font-size: 6px; list-style: none; }
.defs { position: absolute; width: 0; height: 0; }
.ic { width: 9px; height: 9px; flex: none; display: block; }
.dd {
  flex: none;
  width: 3px;
  height: 2px;
  background: #b7bdc6;
  clip-path: polygon(0 0, 100% 0, 50% 100%);
}
.dd.dim { background: #77808c; }
.dd.wide { width: 5px; height: 4px; margin: 0 3px 0 1px; }
.dd.up { clip-path: polygon(50% 0, 100% 100%, 0 100%); background: #4c5257; }
.caption .dd, .recovery .dd { width: 4px; height: 3px; background: #cdd1d8; }

/* title bar */
.titlebar { display: grid; grid-template-columns: 1fr auto 1fr; align-items: center; height: 13px; }
.quick { display: flex; align-items: center; gap: 2px; padding-left: 8px; }
.logo { width: 11px; height: 11px; justify-content: center; background: #d9174b; color: #fff; font-weight: 700; font-size: 8px; border-radius: 1px; margin-right: 1px; }
.quick .logo + .dd { margin-right: 2px; }
.share { gap: 2px; color: #7fb6dd; }
.doc-title { display: flex; gap: 6px; font-weight: 400; color: #d3d7dd; margin-left: -112px; }
.account { display: flex; align-items: center; justify-content: flex-end; gap: 3px; }
.play { width: 2px; height: 4px; background: #c9ced6; clip-path: polygon(0 0, 100% 50%, 0 100%); }
.search { width: 83px; height: 9px; background: #46516a; padding: 0 1px; font-style: italic; appearance: none; }
.search::placeholder { color: #b4bac6; opacity: 1; }
.sign { gap: 2px; margin-right: 18px; color: #d9dce1; }
.help { width: 8px; height: 8px; border-radius: 50%; justify-content: center; background: #e6e8eb; color: #222933; margin-left: 7px; font-weight: 700; }
.window-buttons { display: flex; gap: 13px; margin-left: 31px; }

/* ribbon tabs */
.menu { display: flex; height: 12px; padding: 2px 0 0 5px; color: #a5adb8; }
.menu button { padding: 0 4px; }
.menu .active { background: #3b4453; color: #e2e5e9; padding: 1px 4px 0; height: 10px; }
.menu .camera { gap: 2px; margin-left: 6px; }
.camera i:first-child { width: 7px; height: 4px; background: #e2e5e9; }

/* ribbon */
.ribbon { display: flex; height: 47px; background: #3b4453; padding-left: 3px; border-bottom: 1px solid #303845; }
.panel { display: flex; flex-direction: column; justify-content: space-between; border-right: 1px solid #303845; flex: none; }
.panel.view { border-right: 0; }
.tools { display: grid; padding-top: 3px; height: 36px; align-items: start; }
.big { flex-direction: column; justify-content: flex-start; line-height: 7px; height: 33px; }
.big svg { width: 17px; height: 17px; flex: none; }
.big .dd { margin-top: 1px; }
.big.two { display: block; line-height: 7px; text-align: center; }
.big.two svg { display: block; margin: 0 auto; }
.col { display: flex; flex-direction: column; }
.col > button, .col > .row > button { height: 11px; gap: 3px; padding-left: 1px; }
.col.spread .dd { margin-left: auto; margin-right: 3px; }
.row { display: flex; height: 11px; }
.row button { width: 11px; }
.caption { align-self: center; height: 10px; gap: 3px; }
.draw { width: 105px; }
.draw .tools { grid-template-columns: 20px 22px 23px 21px 18px; }
.modify { width: 117px; }
.modify .tools { grid-template-columns: 34px 32px 35px 14px; }
.annotation { width: 90px; }
.annotation .tools { grid-template-columns: 22px 28px 39px; }
.layer { width: 126px; }
.layer .tools { grid-template-columns: 27px 97px; }
.block { width: 95px; }
.block .tools { grid-template-columns: 19px 18px 56px; }
.props { width: 123px; }
.props .tools { grid-template-columns: 26px 12px 83px; }
.groups { width: 33px; }
.groups .tools { grid-template-columns: 18px 13px; }
.utils { width: 45px; }
.utils .tools { grid-template-columns: 30px 13px; }
.clip { width: 42px; }
.clip .tools { grid-template-columns: 24px 17px; }
.view { width: 28px; }
.groups .on { background: #2f6f96; }
.combo { display: flex; align-items: center; height: 9px; margin: 1px 0; gap: 1px; padding: 0 2px; background: #4a566b; }
.combo select { flex: 1; min-width: 0; height: 9px; appearance: none; color: #d3d7dd; padding-left: 1px; }
.swatch { width: 7px; height: 7px; background: #fff; flex: none; }
.rule { width: 30px; height: 1px; background: #aeb6c1; flex: none; }
.icons .ic { margin: 1px 2px; }
.wheel { width: 8px; height: 8px; margin: 1px 2px 2px; border-radius: 50%; background: conic-gradient(#e8b04c, #d9534f, #9a5bb5, #4a8fd6, #49b675, #d9d250, #e8b04c); }

/* drawing tabs */
.files { display: flex; align-items: center; height: 12px; padding-left: 10px; font-family: Roboto, "Liberation Sans", sans-serif; }
.files .burger i { width: 8px; height: 6px; border: solid #d3d7dd; border-width: 1px 0; background: linear-gradient(#d3d7dd, #d3d7dd) 0 50% / 100% 1px no-repeat; }
.slash { width: 4px; height: 8px; margin: 0 4px; background: linear-gradient(115deg, transparent 44%, #59616e 44%, #59616e 58%, transparent 58%); flex: none; }
.start { width: 11px; }
.long { width: 108px; }
.short { width: 24px; }
.files .current { height: 11px; margin-left: 8px; padding: 0 4px 0 7px; gap: 2px; background: #3b4453; color: #f0f1f3; font-weight: 700; clip-path: polygon(5px 0, 100% 0, calc(100% - 4px) 100%, 0 100%); }
.plus { margin-left: 4px; }

/* work area */
.work { flex: 1; display: flex; min-height: 0; border-top: 2px solid #3b4453; }
.recovery { width: 173px; flex: none; display: flex; flex-direction: column; background: #2d3440; border: solid #2d3440; border-width: 0 1px 4px 2px; border-left-color: #3f7f9b; box-shadow: inset 1px 0 #232a34; font-family: Roboto, "Liberation Sans", sans-serif; }
.recovery h2 { height: 10px; line-height: 10px; background: #373f4d; padding-left: 8px; font-weight: 400; color: #d3d7dd; margin-bottom: 1px; }
.recovery section { background: #3b4453; margin: 0 2px 0 1px; }
.recovery h3 { display: flex; align-items: center; justify-content: space-between; height: 11px; background: #2d3440; padding: 0 3px 0 4px; color: #e2e5e9; }
.backup { flex: 160; }
.details { flex: 240; }
.preview { flex: 121; }
.splitter { height: 4px; display: flex; justify-content: center; }
.splitter i { width: 10px; height: 2px; margin-top: 1px; background: #6c7480; }
.backup ul { padding-top: 1px; }
.backup li { display: flex; align-items: center; gap: 2px; padding-left: 3px; height: 8px; }
.box { width: 4px; height: 4px; border: 1px solid #79828f; }
.canvas { flex: 1; position: relative; background: #222831; min-width: 0; overflow: hidden; }
.drawing { position: absolute; inset: 0; width: 100%; height: 100%; }
.view-label { position: absolute; left: 2px; top: 2px; }
.viewport-buttons { position: absolute; right: 0; top: 3px; display: flex; }
.compass {
  position: absolute; right: 6px; top: 21px; width: 57px; height: 57px;
  border: 6px solid #444b54; border-radius: 50%;
  display: grid; place-items: center;
  font: 700 9px/10px "Liberation Sans", sans-serif;
}
.compass > span { position: absolute; }
.n { top: -9px; }
.s { bottom: -9px; }
.w { left: -9px; }
.e { right: -7px; }
.compass .top { width: 24px; height: 24px; justify-content: center; background: #a9acb0; border: 4px solid #bcbebf; color: #5a6270; font: 700 6px/8px "Liberation Sans", sans-serif; }
.wcs { position: absolute; right: 23px; top: 90px; width: 22px; height: 8px; padding-left: 2px; border-radius: 2px; background: #9a9eaa; color: #5f6673; }
.navbar { position: absolute; right: 0; top: 110px; width: 12px; height: 116px; background: #656b72; }
.navbar svg { display: block; width: 12px; height: 116px; }
.command { position: absolute; left: 21%; right: 291px; bottom: 2px; font: 6px/7px "Liberation Mono", monospace; }
.command p { width: max-content; margin: 0 0 2px 26px; background: #505458; color: #aeb1b3; white-space: nowrap; }
.command p + p { color: #d3d5d6; }
.command-line { display: flex; align-items: center; margin-left: -2px; gap: 1px; }
.grip { width: 2px; height: 9px; background: repeating-linear-gradient(#8b929b 0 1px, transparent 1px 2px); }
.prompt { flex: 1; display: flex; align-items: center; height: 12px; gap: 2px; padding: 0 2px; margin-left: 2px; background: #b9bcbc; }
.prompt .dd { background: #5b6167; }
.prompt input { flex: 1; padding-left: 2px; font-style: italic; color: #43484c; }
.prompt input::placeholder { color: #62676b; opacity: 1; }
```
